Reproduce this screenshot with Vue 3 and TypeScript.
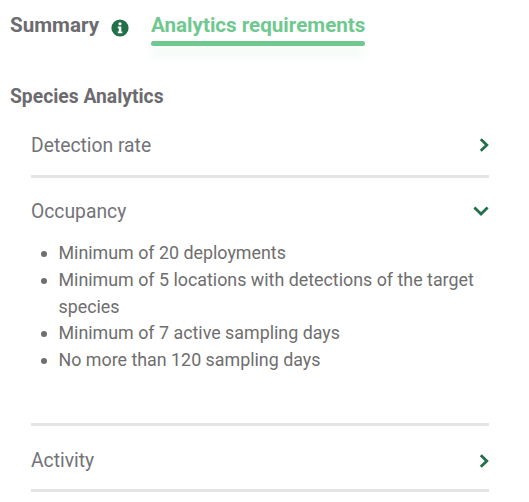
<script setup lang="ts">
const occupancy: string[] = [
  'Minimum of 20 deployments',
  'Minimum of 5 locations with detections of the target species',
  'Minimum of 7 active sampling days',
  'No more than 120 sampling days',
]
</script>

<template>
  <div class="page">
    <nav class="tabs">
      <div class="tab">
        <span class="tab-label">Summary</span>
        <svg class="info" viewBox="0 0 18 18" width="18" height="18" aria-hidden="true">
          <circle cx="9" cy="9" r="8.6" fill="#22704a" />
          <rect x="7.6" y="3.6" width="2.8" height="2.6" rx="0.6" fill="#fff" />
          <path d="M6.8 7.5h3.5v5h1v1.7H6.8v-1.7h1v-3.3h-1z" fill="#fff" />
        </svg>
      </div>
      <div class="tab active">Analytics requirements</div>
    </nav>

    <h2 class="heading">Species Analytics</h2>

    <section class="panels">
      <div class="panel">
        <div class="panel-head">
          <span>Detection rate</span>
          <svg class="chev" viewBox="0 0 10 14" width="10" height="14" aria-hidden="true">
            <path d="M1.8 1.2 7.8 7 1.8 12.8" />
          </svg>
        </div>
      </div>
      <div class="panel">
        <div class="panel-head">
          <span>Occupancy</span>
          <svg class="chev" viewBox="0 0 16 10" width="16" height="10" aria-hidden="true">
            <path d="M1.4 1.6 8 8 14.6 1.6" />
          </svg>
        </div>
        <ul class="reqs">
          <li v-for="item in occupancy" :key="item">{{ item }}</li>
        </ul>
      </div>
      <div class="panel last">
        <div class="panel-head">
          <span>Activity</span>
          <svg class="chev" viewBox="0 0 10 14" width="10" height="14" aria-hidden="true">
            <path d="M1.8 1.2 7.8 7 1.8 12.8" />
          </svg>
        </div>
      </div>
    </section>
  </div>
</template>

<style>
html, body { margin: 0; background: #fff; }
</style>

<style scoped>
.page {
  width: 529px;
  height: 502px;
  box-sizing: border-box;
  overflow: hidden;
  padding: 13px 40px 0 10px;
  font-family: Roboto, "Liberation Sans", sans-serif;
  color: #6b6b6b;
}
.tabs {
  display: flex;
  align-items: flex-start;
  gap: 22px;
  height: 33px;
}
.tab {
  display: flex;
  align-items: center;
  gap: 12px;
  font-size: 20.6px;
  font-weight: 700;
  line-height: 25px;
  color: #6c6b70;
}
.info { margin-top: 4px; }
.tab.active {
  color: #6fc98f;
  height: 33px;
  display: block;
  position: relative;
}
.tab.active::after {
  content: "";
  position: absolute;
  left: 0;
  right: 0;
  top: 28px;
  height: 5px;
  border-radius: 3px;
  background: #6fc98f;
  box-shadow: 0 8px 12px rgba(111, 201, 143, 0.18);
}
.heading {
  margin: 0;
  padding-top: 39px;
  font-size: 19.3px;
  line-height: 24px;
  font-weight: 700;
  color: #6c6b70;
}
.panels { margin: 3px 0 0 21px; }
.panel { border-bottom: 3px solid #e4e4e4; }
.panel-head {
  display: flex;
  justify-content: space-between;
  align-items: center;
  height: 60px;
  padding-top: 3px;
  font-size: 19.3px;
  color: #737378;
}
.last .panel-head { padding-top: 7px; height: 56px; }
.chev {
  fill: none;
  stroke: #22704a;
  stroke-width: 2.8;
}
.reqs {
  margin: -1px 0 0;
  padding: 0 0 49px 27.5px;
  font-size: 17.85px;
  line-height: 26.75px;
  color: #6e6e6e;
}
</style>
